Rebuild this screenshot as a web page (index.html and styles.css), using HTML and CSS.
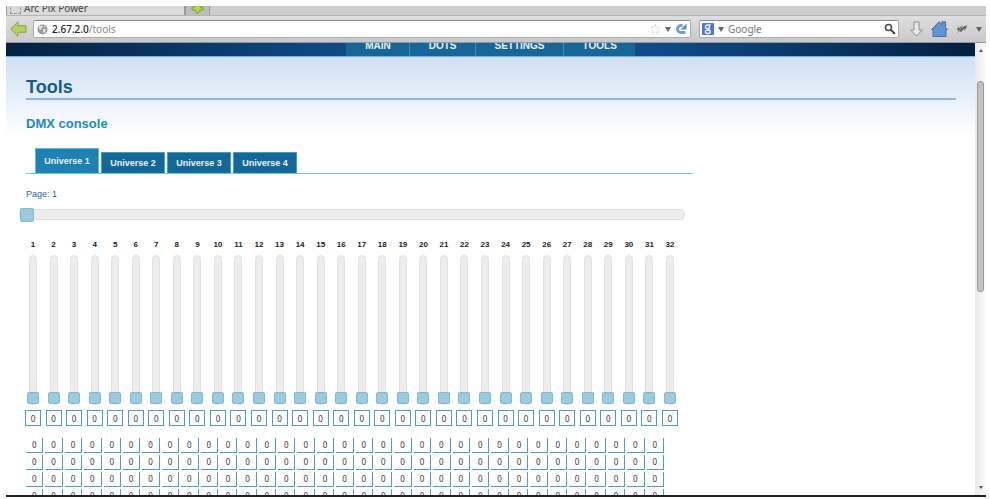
FILE: index.html
```html
<!DOCTYPE html>
<html lang="en">
<head>
  <meta charset="UTF-8" />
  <title>Arc Pix Power</title>
  <link rel="stylesheet" href="styles.css">
</head>
<body>
  <div class="window">
    <div class="tab-strip">
      <div class="browser-tab">
        <span class="blank-icon"></span>
        <span>Arc Pix Power</span>
      </div>
      <button class="new-tab" aria-label="New tab">
        <svg width="13" height="13" viewBox="0 0 13 13"><path d="M4 1h5v4h3v3h-3l-2.500 4l-2.500 -4h-3v-3h3z" fill="#b4d943" stroke="#7d9a35" /></svg>
      </button>
    </div>

    <div class="toolbar">
      <button class="icon-btn" aria-label="Back">
        <svg width="17" height="16" viewBox="0 0 17 16"><path d="M.7 8L8 .7v4h8v6.600H8v4z" fill="#b4d25a" stroke="#85a04a" stroke-linejoin="round" /></svg>
      </button>
      <div class="url-bar">
        <svg width="11" height="11" viewBox="0 0 11 11"><circle cx="5.500" cy="5.500" r="5" fill="#9a9a9a" /><path d="M2 2.500l3-1 1 2-2 1 0 1.500-2-1zM6 5l3 0-1 3-2 1zM7 1.500l2 1.500-1.500 .5z" fill="#e4e4e4" /></svg>
        <div class="address"><b>2.67.2.0</b>/tools</div>
        <svg width="12" height="12" viewBox="0 0 12 12"><path d="M6 1l1.500 3.300 3.500.4-2.600 2.400.8 3.600L6 8.900l-3.200 1.800.8-3.600L1 4.700l3.500-.4z" fill="#fff" stroke="#d4d4d4" stroke-dasharray="2 1" /></svg>
        <span class="arrow"></span>
        <button class="icon-btn" aria-label="Reload">
          <svg width="12" height="12" viewBox="0 0 12 12"><path d="M10.500 9.500H6A3.500 3.500 0 0 1 6 2.500h1.500" fill="none" stroke="#6ea3d3" stroke-width="3" /><path d="M11.500 .5v6H5.500z" fill="#5b93c9" /></svg>
        </button>
      </div>
      <div class="search-bar">
        <svg width="12" height="12" viewBox="0 0 12 12"><rect width="12" height="12" rx="1" fill="#4a74e8" /><circle cx="5.500" cy="3.800" r="2" fill="none" stroke="#fff" stroke-width="1.300" /><ellipse cx="5.800" cy="8.800" rx="2.500" ry="1.700" fill="none" stroke="#fff" stroke-width="1.300" /><path d="M7 1.800h2M6.500 5.500l1 1.500" stroke="#fff" /></svg>
        <span class="arrow"></span>
        <input type="text" placeholder="Google" aria-label="Search" />
        <svg width="12" height="12" viewBox="0 0 12 12"><circle cx="4.500" cy="4.500" r="3" fill="none" stroke="#444" stroke-width="1.500" /><path d="M7 7l4 4" stroke="#444" stroke-width="2" /></svg>
      </div>
      <button class="icon-btn" aria-label="Downloads">
        <svg width="13" height="16" viewBox="0 0 13 16"><path d="M4 1h5v8h3.300L6.500 15 .7 9H4z" fill="#e8e8e8" stroke="#8c8c8c" /></svg>
      </button>
      <button class="icon-btn" aria-label="Home">
        <svg width="17" height="16" viewBox="0 0 17 16"><path d="M.7 8.500L8 .8l3 2.500V.8h3.500v5.500l2 2.200H15V15.500H2V8.500z" fill="#6593d2" stroke="#46709f" stroke-linejoin="round" /></svg>
      </button>
      <button class="icon-btn" aria-label="Add-on">
        <svg width="12" height="10" viewBox="0 0 12 10"><path d="M1 4.500l4-2L7 3l4-2-1 4-3 1-2 2-3-1z" fill="#666" /><path d="M1 2l4 3M6 1v3M9 7L7 5M1 9l3-3" stroke="#aaa" /></svg>
      </button>
      <span class="arrow"></span>
    </div>

    <div class="viewport">
      <div class="page">
        <nav>
          <a href="#main">MAIN</a>
          <a href="#dots">DOTS</a>
          <a href="#settings">SETTINGS</a>
          <a href="#tools">TOOLS</a>
        </nav>

        <main>
          <h1>Tools</h1>
          <h2>DMX console</h2>

          <div class="console">
            <div class="tabs">
              <button class="active">Universe 1</button>
              <button>Universe 2</button>
              <button>Universe 3</button>
              <button>Universe 4</button>
            </div>

            <label class="page-label" for="pageSlider">Page: <span id="pageNumber">1</span></label>
            <input type="range" class="page-slider" id="pageSlider" min="1" max="16" value="1" />

            <div class="faders" id="faders"></div>

            <table id="values">
              <tbody></tbody>
            </table>
          </div>
        </main>
      </div>

      <div class="scrollbar">
        <span class="scroll-up"></span>
        <span class="scroll-thumb"></span>
        <span class="scroll-down"></span>
      </div>
    </div>
  </div>

  <script>
    const CHANNELS = 32;
    const TABLE_COLS = 33;
    const TABLE_ROWS = 4;

    const faders = document.getElementById('faders');
    const tbody = document.querySelector('#values tbody');
    const pageSlider = document.getElementById('pageSlider');

    for (let i = 1; i <= CHANNELS; i++) {
      const div = document.createElement('div');
      div.className = 'fader';
      div.innerHTML = `
        <label for="fader${i}">${i}</label>
        <input type="range" id="fader${i}" min="0" max="255" value="0" />
        <input type="text" value="0" aria-label="Value ${i}" />
      `;
      const [range, text] = div.querySelectorAll('input');
      range.addEventListener('input', () => { text.value = range.value; });
      text.addEventListener('change', () => { range.value = text.value; });
      faders.appendChild(div);
    }

    for (let r = 0; r < TABLE_ROWS; r++) {
      const tr = document.createElement('tr');
      tr.innerHTML = '<td>0</td>'.repeat(TABLE_COLS);
      tbody.appendChild(tr);
    }

    pageSlider.addEventListener('input', () => {
      document.getElementById('pageNumber').textContent = pageSlider.value;
    });
  </script>
</body>
</html>
```
FILE: styles.css
```css
* {
  box-sizing: border-box;
  margin: 0;
  padding: 0;
}

body {
  font-family: 'Liberation Sans', Arial, sans-serif;
  background: #fff;
  height: 100vh;
  padding: 6px 4px 2px 6px;
}

button {
  border: none;
  background: none;
  cursor: pointer;
}

svg {
  display: block;
  flex: none;
}

.window {
  height: 100%;
  display: flex;
  flex-direction: column;
  border-bottom: 2px solid #222;
  overflow: hidden;
}

/* browser bars */
.tab-strip {
  display: flex;
  align-items: flex-end;
  flex: none;
  height: 10px;
  background: #cdcdcd;
  border-bottom: 1px solid #b4b4b4;
  overflow: hidden;
  font-family: 'Noto Sans', sans-serif;
  font-size: 10px;
  line-height: 14px;
  color: #444;
}

.browser-tab {
  display: flex;
  align-items: center;
  gap: 3px;
  width: 180px;
  padding-left: 3px;
  background: #dadada;
  border-left: 1px solid #999;
  border-right: 2px solid #999;
}

.blank-icon {
  width: 11px;
  height: 11px;
  border: 1px dashed #999;
}

.new-tab {
  padding: 0 5px;
  background: #bdbdbd;
  border-right: 1px solid #999;
}

.toolbar {
  display: flex;
  align-items: center;
  flex: none;
  gap: 8px;
  height: 27px;
  padding: 0 4px;
  background: linear-gradient(#dedede, #c9c9c9);
  border-bottom: 1px solid #8d9aa5;
  font-family: 'Noto Sans', sans-serif;
  font-size: 10px;
}

.icon-btn {
  flex: none;
}

.url-bar,
.search-bar {
  display: flex;
  align-items: center;
  gap: 4px;
  height: 18px;
  background: #fff;
  border: 1px solid #aaa;
  border-top-color: #888;
  border-radius: 2px;
}

.url-bar {
  flex: 1;
  padding: 0 3px;
  margin-left: -2px;
}

.search-bar {
  width: 200px;
  padding: 0 2px;
  margin-right: 3px;
}

.address {
  flex: 1;
  color: #888;
}

.address b {
  font-weight: 500;
  color: #222;
}

.search-bar input {
  flex: 1;
  min-width: 0;
  border: none;
  outline: none;
  font: inherit;
}

.search-bar input::placeholder {
  color: #777;
}

.arrow {
  flex: none;
  border: 3px solid transparent;
  border-top: 5px solid #666;
  border-bottom: none;
}

/* page */
.viewport {
  flex: 1;
  min-height: 0;
  display: flex;
}

.page {
  flex: 1;
  overflow: hidden;
}

nav {
  display: flex;
  justify-content: center;
  align-items: flex-end;
  height: 14px;
  background: linear-gradient(to right, #04213f, #0f4b8a 35%, #0f4b8a 67%, #041f3f);
  border-bottom: 1px solid #6db7dd;
  overflow: hidden;
}

nav a {
  padding: 0 18px 4px 19px;
  background: #186697;
  border-right: 1px solid #2c91bd;
  color: #e6f3fa;
  font-size: 10px;
  font-weight: bold;
  line-height: 12px;
  text-decoration: none;
}

nav a:last-child {
  border-right: none;
}

main {
  padding: 19px 19px 0 20px;
  background: linear-gradient(#cfe0f2, #e6f0fa 40px, #fff 80px);
}

h1 {
  color: #175c8c;
  font-size: 18px;
  line-height: 22px;
  border-bottom: 2px solid #92b6d3;
  margin-bottom: 16px;
}

h2 {
  color: #1f8bba;
  font-size: 13px;
  line-height: 16px;
  margin-bottom: 16px;
}

.console {
  width: 667px;
}

.tabs {
  display: flex;
  align-items: flex-end;
  gap: 2px;
  padding-left: 9px;
  border-bottom: 1px solid #6cc6dc;
}

.tabs button {
  width: 64px;
  height: 21px;
  background: #156797;
  border: 1px solid #3f9fc4;
  border-bottom: none;
  color: #e6f3fa;
  font-family: inherit;
  font-size: 9px;
  font-weight: bold;
}

.tabs .active {
  height: 25px;
  background: #1f80b3;
  border-color: #58bcdc;
}

.page-label {
  display: block;
  margin-top: 14px;
  color: #1c6592;
  font-size: 9px;
  line-height: 12px;
}

input[type="range"] {
  appearance: none;
  display: block;
  background: #ededed;
  border: 1px solid #e2e2e2;
  border-radius: 4px;
  outline: none;
}

input[type="range"]::-webkit-slider-thumb {
  appearance: none;
  background: #9bcbdc;
  border: 1px solid #7fb9d2;
  border-radius: 2px;
}

.page-slider {
  width: 666px;
  height: 11px;
  margin: 9px 0 0 -7px;
}

.page-slider::-webkit-slider-thumb {
  width: 14px;
  height: 14px;
}

.faders {
  display: flex;
  justify-content: space-between;
  width: 653px;
  margin: 19px 0 0 -1px;
}

.fader {
  display: flex;
  flex-direction: column;
  align-items: center;
  width: 16px;
}

.fader label {
  color: #222;
  font-size: 8px;
  font-weight: bold;
  line-height: 12px;
}

.fader input[type="range"] {
  writing-mode: vertical-lr;
  direction: rtl;
  width: 8px;
  height: 150px;
  margin: 4px 0 5px;
}

.fader input[type="range"]::-webkit-slider-thumb {
  width: 12px;
  height: 12px;
}

.fader input[type="text"] {
  width: 16px;
  height: 16px;
  border: 1px solid #4c9fc4;
  color: #333;
  font-family: 'Noto Sans', sans-serif;
  font-size: 8px;
  text-align: center;
}

table {
  table-layout: fixed;
  width: 642px;
  margin: 10px 0 0 -2px;
  border-spacing: 2px;
}

td {
  height: 15px;
  border-right: 1px solid #4c9fc4;
  border-bottom: 1px solid #4c9fc4;
  color: #333;
  font-family: 'Noto Sans', sans-serif;
  font-size: 8px;
  line-height: 14px;
  text-align: center;
}

/* scrollbar */
.scrollbar {
  display: flex;
  flex-direction: column;
  align-items: center;
  width: 11px;
  padding: 6px 0;
  background: linear-gradient(to right, #e9e9e9, #fafafa);
}

.scroll-up,
.scroll-down {
  border: 2px solid transparent;
}

.scroll-up {
  border-bottom: 3px solid #555;
  border-top: none;
}

.scroll-down {
  border-top: 3px solid #555;
  border-bottom: none;
  margin-top: auto;
}

.scroll-thumb {
  width: 7px;
  height: 48%;
  margin-top: 29px;
  background: #c3c3c3;
  border: 1px solid #999;
  border-radius: 3px;
}
```
